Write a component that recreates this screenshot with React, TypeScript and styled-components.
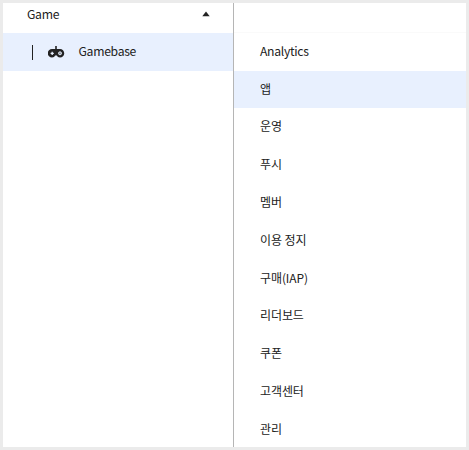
import React from "react";
import styled, { createGlobalStyle } from "styled-components";

const GlobalStyle = createGlobalStyle`
  * { box-sizing: border-box; }
  body { margin: 0; background: #ebebeb; }
`;

const Frame = styled.div`
  display: flex;
  width: 469px;
  height: 450px;
  padding: 3px;
  background: #ebebeb;
  color: #222;
  font-family: "Noto Sans CJK KR", sans-serif;
  font-size: 12px;
  line-height: 18px;
  overflow: hidden;
`;

const Sidebar = styled.nav`
  width: 231px;
  background: #fff;
  border-right: 1px solid #b5b5b5;
`;

const GroupHeader = styled.div`
  display: flex;
  align-items: center;
  justify-content: space-between;
  height: 30px;
  padding: 0 23px 8px 24px;
`;

const ServiceRow = styled.div`
  display: flex;
  align-items: center;
  height: 38px;
  padding-left: 29px;
  background: #e8f0fe;
`;

const ActiveMark = styled.span`
  width: 1px;
  height: 15px;
  margin-right: 15px;
  background: #222;
`;

const Latin = styled.span`
  font-size: 12.2px;
  letter-spacing: -0.3px;
`;

const ServiceName = styled(Latin)`
  margin-left: 13.5px;
  padding-bottom: 2px;
`;

const Submenu = styled.div`
  flex: 1;
  background: #fff;
`;

const SubmenuTop = styled.div`
  height: 30px;
  border-bottom: 1px solid #fafafa;
`;

const MenuList = styled.ul`
  margin: 0;
  padding: 0;
  list-style: none;
`;

const MenuItem = styled.li<{ $active?: boolean }>`
  display: flex;
  align-items: center;
  height: ${(p) => (p.$active ? "37px" : "37.8px")};
  padding: 0 0 0.5px 26px;
  letter-spacing: -0.1px;
  background: ${(p) => (p.$active ? "#e8f0fe" : "transparent")};

  &:first-child {
    padding-bottom: 2px;
  }
`;

const items = ["Analytics", "앱", "운영", "푸시", "멤버", "이용 정지", "구매(IAP)", "리더보드", "쿠폰", "고객센터", "관리"];

const GamepadIcon = () => (
  <svg width="17" height="13" viewBox="0 0 17 13">
    <path d="M7.2 0h1.6v4H7.2z" fill="#222" />
    <path
      d="M4 3h8a4.2 4.2 0 0 1 0 8.5c-1.7 0-2.6-.9-3.1-2H7.1c-.5 1.1-1.4 2-3.1 2A4.2 4.2 0 0 1 4 3z"
      fill="#222"
    />
    <path d="M4.2 5.7v3.2M2.6 7.3h3.2" stroke="#e8f0fe" strokeWidth="1.3" />
    <circle cx="12" cy="7.3" r="1.5" fill="#8b9098" stroke="#e8f0fe" strokeWidth="0.9" />
  </svg>
);

const CollapseArrow = () => (
  <svg width="8" height="6" viewBox="0 0 8 6">
    <path d="M4 0.5L7.7 5.3H0.3z" fill="#222" />
  </svg>
);

export default function App() {
  return (
    <>
      <GlobalStyle />
      <Frame>
        <Sidebar>
          <GroupHeader>
            <Latin>Game</Latin>
            <CollapseArrow />
          </GroupHeader>
          <ServiceRow>
            <ActiveMark />
            <GamepadIcon />
            <ServiceName>Gamebase</ServiceName>
          </ServiceRow>
        </Sidebar>
        <Submenu>
          <SubmenuTop />
          <MenuList>
            {items.map((item) => (
              <MenuItem key={item} $active={item === "앱"}>
                {item === "Analytics" ? <Latin>{item}</Latin> : item}
              </MenuItem>
            ))}
          </MenuList>
        </Submenu>
      </Frame>
    </>
  );
}
